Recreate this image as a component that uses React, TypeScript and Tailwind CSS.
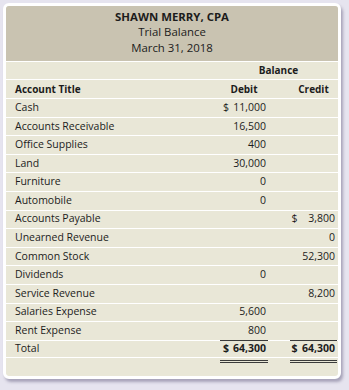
const rows = [
  { title: 'Cash', debit: '11,000', debitSign: true },
  { title: 'Accounts Receivable', debit: '16,500' },
  { title: 'Office Supplies', debit: '400' },
  { title: 'Land', debit: '30,000' },
  { title: 'Furniture', debit: '0' },
  { title: 'Automobile', debit: '0' },
  { title: 'Accounts Payable', credit: '3,800', creditSign: true },
  { title: 'Unearned Revenue', credit: '0' },
  { title: 'Common Stock', credit: '52,300' },
  { title: 'Dividends', debit: '0' },
  { title: 'Service Revenue', credit: '8,200' },
  { title: 'Salaries Expense', debit: '5,600' },
  { title: 'Rent Expense', debit: '800' },
];

type Row = {
  title: string;
  debit?: string;
  credit?: string;
  debitSign?: boolean;
  creditSign?: boolean;
};

function Amount({ value, sign }: { value?: string; sign?: boolean }) {
  if (!value) return null;
  return (
    <div className={`flex ${sign ? 'justify-between' : 'justify-end'}`}>
      {sign && <span>$</span>}
      <span>{value}</span>
    </div>
  );
}

export default function App() {
  return (
    <div
      className="w-[349px] h-[390px] bg-[#e6e4ef] pt-[3px] pl-[3px] text-[#1c1c1c]"
      style={{ fontFamily: '"Open Sans", "Noto Sans", sans-serif' }}
    >
      <div className="w-[338px] h-[376px] rounded-[6px] border-[3px] border-white bg-[#e9e7d7] overflow-hidden shadow-[2px_3px_3px_rgba(90,85,120,0.45)]">
        {/* Title band */}
        <div className="h-[56px] bg-[#c9c3b1] border-b border-white flex flex-col items-center pt-[2.5px] leading-[15.5px]">
          <div className="text-[11.4px] font-bold">SHAWN MERRY, CPA</div>
          <div className="text-[11.4px] font-medium">Trial Balance</div>
          <div className="text-[11.4px] font-medium">March 31, 2018</div>
        </div>

        {/* Column headers */}
        <div className="h-[18px] border-b border-white flex items-center pl-[9px] pr-px text-[10px] font-bold">
          <div className="flex-1" />
          <div className="w-[117px] text-center">Balance</div>
        </div>
        <div className="h-[19px] border-b border-white flex items-center pl-[9px] pr-px text-[10px] font-bold">
          <div className="flex-1">Account Title</div>
          <div className="w-[48px] text-center">Debit</div>
          <div className="w-[22px]" />
          <div className="w-[47px] text-center">Credit</div>
        </div>

        {/* Accounts */}
        {rows.map((r: Row) => (
          <div
            key={r.title}
            className="h-[18.6px] border-b border-white flex items-center pl-[9px] pr-px text-[10.5px] font-medium"
          >
            <div className="flex-1">{r.title}</div>
            <div className="w-[48px] pl-[3px] pr-[2px]">
              <Amount value={r.debit} sign={r.debitSign} />
            </div>
            <div className="w-[22px]" />
            <div className="w-[47px] pl-[1.5px] pr-[2px]">
              <Amount value={r.credit} sign={r.creditSign} />
            </div>
          </div>
        ))}

        {/* Total */}
        <div className="-mt-px h-[18.6px] border-b border-white flex items-stretch pl-[9px] pr-px text-[10.5px] font-medium">
          <div className="flex-1 flex items-center">Total</div>
          <div className="w-[48px] pl-[3px] pr-[2px] border-t border-[#3b3b3b] flex items-center font-bold">
            <div className="w-full">
              <Amount value="64,300" sign />
            </div>
          </div>
          <div className="w-[22px]" />
          <div className="w-[47px] pl-[1.5px] pr-[2px] border-t border-[#3b3b3b] flex items-center font-bold">
            <div className="w-full">
              <Amount value="64,300" sign />
            </div>
          </div>
        </div>
        <div className="flex mt-[2px] pl-[9px] pr-px">
          <div className="flex-1" />
          <div className="w-[48px] h-[3px] border-y border-[#3b3b3b]" />
          <div className="w-[22px]" />
          <div className="w-[47px] h-[3px] border-y border-[#3b3b3b]" />
        </div>
      </div>
    </div>
  );
}
